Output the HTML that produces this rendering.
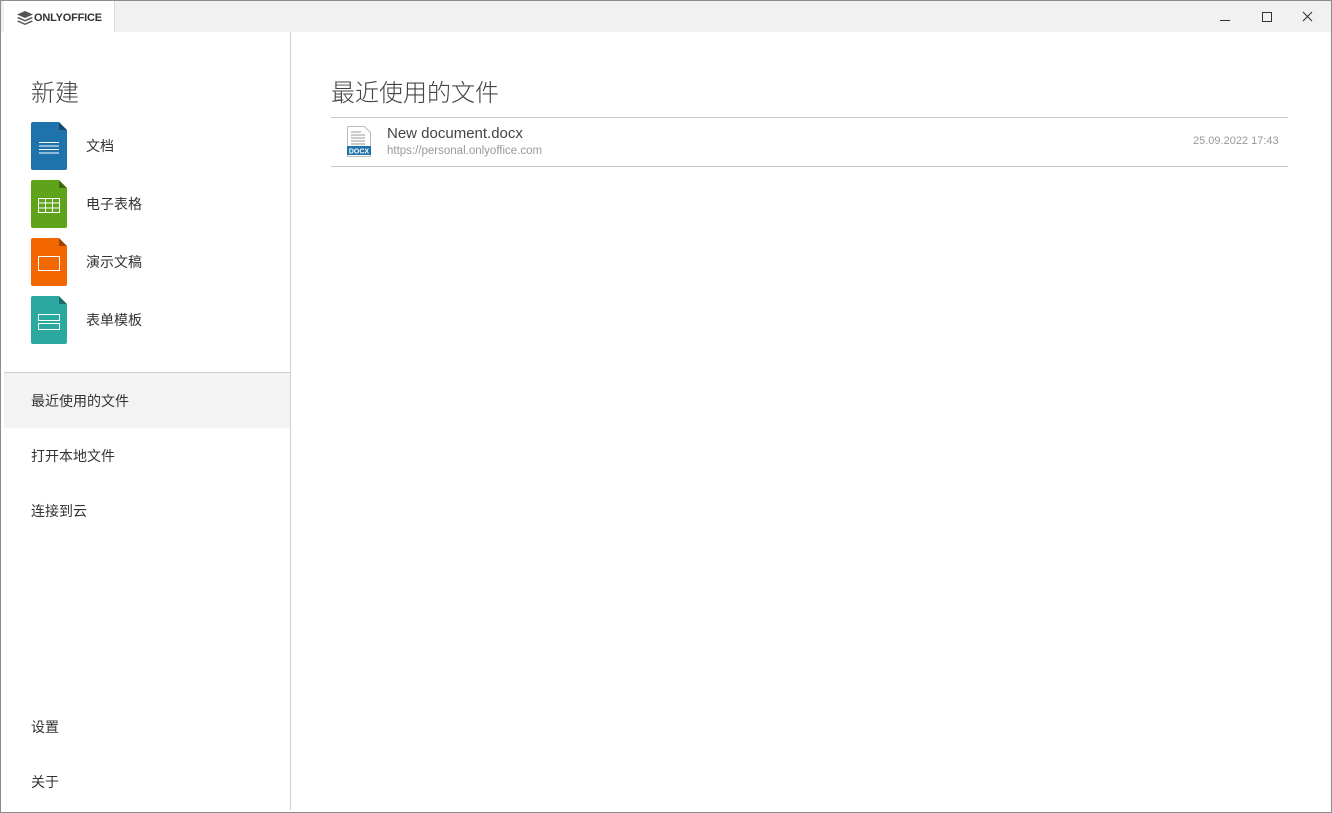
<!DOCTYPE html>
<html><head><meta charset="utf-8"><style>
*{margin:0;padding:0;box-sizing:border-box}
body{width:1332px;height:813px;background:#fff;font-family:"Liberation Sans","Noto Sans CJK SC",sans-serif;color:#444;position:relative;overflow:hidden}
.frame{position:absolute;inset:0;border:1px solid #8c8c8c}
.tb{position:absolute;left:1px;top:1px;right:1px;height:31px;background:#f1f1f1}
.tab{position:absolute;left:4px;top:1px;width:111px;height:31px;background:#fff;border-right:1px solid #ddd;font-weight:bold;font-size:11px;color:#333;padding:11px 0 0 30px;letter-spacing:-0.2px}
.side{position:absolute;left:4px;top:32px;width:287px;bottom:3px;border-right:1px solid #cfcfcf;background:#fff}
.abs{position:absolute}
.ic{position:absolute;left:31px;width:36px;height:48px;border-radius:2px;clip-path:polygon(0 0,28px 0,36px 8px,36px 48px,0 48px)}
.ic i{position:absolute;right:0;top:0;width:8px;height:8px;background:rgba(0,0,0,.35);clip-path:polygon(0 0,100% 100%,0 100%)}
.lbl{position:absolute;left:86px;font-size:14px;color:#333}
.nav{position:absolute;left:31px;font-size:14px;color:#333}
</style></head><body>
<div class="tb"></div>
<div class="tab"><svg class="abs" style="left:13px;top:10px" width="16" height="14" viewBox="0 0 16 14"><path d="M8 0L16 3.5 8 7 0 3.5Z" fill="#555"/><path d="M1.5 6L8 9 14.5 6 16 7 8 10.5 0 7Z" fill="#555"/><path d="M1.5 9.5L8 12.5 14.5 9.5 16 10.5 8 14 0 10.5Z" fill="#555"/></svg>ONLYOFFICE</div>
<svg class="abs" style="left:1220px;top:11px" width="100" height="14"><path d="M0 9.5h10" stroke="#333"/><path d="M42.5 1.5h9v9h-9z" stroke="#333" fill="none"/><path d="M83 1l9 9M92 1l-9 9" stroke="#333" stroke-width="1.1"/></svg>
<div class="side"></div>
<div class="abs" style="left:31px;top:73px;font-size:24px;color:#444;font-weight:300">新建</div>
<div class="ic" style="top:122px;background:#1f73ac"><i></i><svg width="36" height="48"><path d="M8 20.5h20M8 24h20M8 27.5h20M8 31h20" stroke="#fff"/></svg></div>
<div class="lbl" style="top:136px">文档</div>
<div class="ic" style="top:180px;background:#5ea31a"><i></i><svg width="36" height="48"><path d="M7.5 18.5h21v14h-21zM7.5 23h21M7.5 28h21M14.5 18.5v14M21.5 18.5v14" stroke="#fff" fill="none"/></svg></div>
<div class="lbl" style="top:194px">电子表格</div>
<div class="ic" style="top:238px;background:#f36700"><i></i><svg width="36" height="48"><path d="M7.5 18.5h21v14h-21z" stroke="#fff" fill="none"/></svg></div>
<div class="lbl" style="top:252px">演示文稿</div>
<div class="ic" style="top:296px;background:#2ba9a1"><i></i><svg width="36" height="48"><path d="M7.5 18.5h21v6h-21zM7.5 27.5h21v6h-21z" stroke="#fff" fill="none"/></svg></div>
<div class="lbl" style="top:310px">表单模板</div>
<div class="abs" style="left:4px;top:372px;width:286px;height:1px;background:#cfcfcf"></div>
<div class="abs" style="left:4px;top:373px;width:286px;height:55px;background:#f3f3f3"></div>
<div class="nav" style="top:391px">最近使用的文件</div>
<div class="nav" style="top:446px">打开本地文件</div>
<div class="nav" style="top:501px">连接到云</div>
<div class="nav" style="top:717px">设置</div>
<div class="nav" style="top:772px">关于</div>
<div class="abs" style="left:331px;top:73px;font-size:24px;color:#444;font-weight:300">最近使用的文件</div>
<div class="abs" style="left:331px;top:117px;width:957px;height:1px;background:#c8c8c8"></div>
<div class="abs" style="left:331px;top:166px;width:957px;height:1px;background:#c8c8c8"></div>
<svg class="abs" style="left:346px;top:126px" width="26" height="32"><path d="M1.5 .5h17l6 6v24h-23z" fill="#fff" stroke="#bbb"/><path d="M5 6h10M5 9h14M5 12h14M5 15h14M5 18h14" stroke="#999"/><rect x="1" y="20" width="24" height="9" fill="#1f73ac"/><text x="13" y="27.5" font-size="7" font-weight="bold" fill="#fff" text-anchor="middle" font-family="Liberation Sans">DOCX</text></svg>
<div class="abs" style="left:387px;top:125px;font-size:15px;color:#444">New document.docx</div>
<div class="abs" style="left:387px;top:145px;font-size:11.5px;color:#999">https://personal.onlyoffice.com</div>
<div class="abs" style="left:1193px;top:135px;font-size:11px;color:#999">25.09.2022 17:43</div>
<div class="frame"></div>
</body></html>
